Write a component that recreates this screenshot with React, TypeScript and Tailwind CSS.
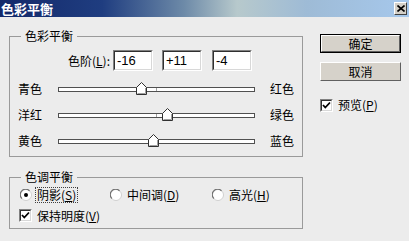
const cjk = "font-['Noto_Sans_CJK_SC',sans-serif]"

const Sunken = "border border-t-[#808080] border-l-[#808080] border-b-white border-r-white"

const LevelInput = ({ value }: { value: string }) => (
  <div className={`w-[40px] h-[21px] bg-white ${Sunken}`}>
    <div className="h-full border border-t-[#303030] border-l-[#303030] border-b-[#d8d8d8] border-r-[#d8d8d8] pl-[2px] flex items-center text-[13px] text-black font-['Liberation_Sans',sans-serif]">
      {value}
    </div>
  </div>
)

const Thumb = () => (
  <svg width="11" height="13" viewBox="0 0 11 13">
    <polygon points="5.5,0.5 10.5,5.5 10.5,12.5 0.5,12.5 0.5,5.5" fill="#ffffff" stroke="#303030" strokeWidth="1" />
    <line x1="1.5" y1="11.5" x2="9.5" y2="11.5" stroke="#a0a0a0" />
    <line x1="9.5" y1="6" x2="9.5" y2="11.5" stroke="#a0a0a0" />
  </svg>
)

const SliderRow = ({ left, right, value }: { left: string; right: string; value: number }) => {
  const pos = 98.5 + (value / 100) * 98.5
  return (
    <div className="h-[26px] flex items-center pl-[8px]">
      <div className="w-[40px] text-[12px] text-black">{left}</div>
      <div className="relative w-[197px] h-[5px] bg-white border border-t-[#505050] border-l-[#505050] border-b-[#505050] border-r-[#505050]">
        <div className="absolute left-[97px] top-0 w-px h-full bg-[#a0a0a0]" />
        <div className="absolute top-[-6px]" style={{ left: pos - 6 }}>
          <Thumb />
        </div>
      </div>
      <div className="ml-[15px] text-[12px] text-black">{right}</div>
    </div>
  )
}

const Radio = ({ checked }: { checked?: boolean }) => (
  <svg width="12" height="12" viewBox="0 0 12 12">
    <circle cx="6" cy="6" r="5.5" fill="#ffffff" stroke="#d0d0d0" />
    <path d="M1.8 9.5 A5 5 0 0 1 9.5 1.8" fill="none" stroke="#707070" strokeWidth="1.2" />
    {checked && <circle cx="6" cy="6" r="2" fill="#000000" />}
  </svg>
)

const Check = () => (
  <div className={`w-[13px] h-[13px] bg-white ${Sunken}`}>
    <div className="w-full h-full border border-t-[#303030] border-l-[#303030] border-b-[#d8d8d8] border-r-[#d8d8d8] flex items-center justify-center">
      <svg width="9" height="9" viewBox="0 0 9 9">
        <path d="M1 4 L3.3 6.5 L8 1.5" fill="none" stroke="#000000" strokeWidth="1.8" />
      </svg>
    </div>
  </div>
)

const Button = ({ label, main }: { label: string; main?: boolean }) => (
  <div className={`w-[81px] h-[19px] ${main ? "border border-black" : ""}`}>
    <div className="w-full h-full bg-[#d6d2ca] border border-t-white border-l-white border-b-[#606060] border-r-[#606060] flex items-center justify-center text-[12px] text-black">
      {label}
    </div>
  </div>
)

export default function App() {
  return (
    <div className={`w-[409px] h-[241px] bg-[#ececec] flex flex-col overflow-hidden ${cjk}`}>
      <div className="h-[17px] flex items-center justify-between bg-[linear-gradient(90deg,#13296a_0%,#1f3d80_25%,#6d8aa8_45%,#b7c9cc_58%,#9ebbd6_75%,#a6c8ec_100%)]">
        <div className="pl-[1px] text-[13px] font-bold text-white leading-none">色彩平衡</div>
        <div className="mr-[2px] w-[13px] h-[13px] bg-[#d4d0c8] border border-t-white border-l-white border-b-[#404040] border-r-[#404040] flex items-center justify-center">
          <svg width="8" height="7" viewBox="0 0 8 7">
            <path d="M0.5 0.5 L7.5 6.5 M7.5 0.5 L0.5 6.5" stroke="#000" strokeWidth="1.6" />
          </svg>
        </div>
      </div>

      <div className="flex pl-[9px]">
        <div className="w-[294px] flex flex-col">
          <fieldset className="mt-[11px] border border-[#9a9a9a] pb-[2px]">
            <legend className="ml-[11px] px-[4px] text-[12px] leading-[16px] text-black">色彩平衡</legend>
            <div className="mt-[6px] flex items-center">
              <div className="w-[100px] mr-[3px] text-right text-[12px] text-black">
                色阶(<u>L</u>):
              </div>
              <LevelInput value="-16" />
              <div className="ml-[9px]">
                <LevelInput value="+11" />
              </div>
              <div className="ml-[10px]">
                <LevelInput value="-4" />
              </div>
            </div>
            <div className="mt-[5px]">
              <SliderRow left="青色" right="红色" value={-16} />
              <SliderRow left="洋红" right="绿色" value={11} />
              <SliderRow left="黄色" right="蓝色" value={-4} />
            </div>
          </fieldset>

          <fieldset className="mt-[12px] border border-[#9a9a9a] pb-[2px]">
            <legend className="ml-[11px] px-[4px] text-[12px] leading-[16px] text-black">色调平衡</legend>
            <div className="h-[20px] flex items-center pl-[10px] text-[12px] text-black">
              <div className="w-[90px] flex items-center">
                <Radio checked />
                <span className="ml-[3px] px-[1px] border border-dotted border-[#404040] leading-[14px]">
                  阴影(<u>S</u>)
                </span>
              </div>
              <div className="w-[102px] flex items-center">
                <Radio />
                <span className="ml-[5px]">
                  中间调(<u>D</u>)
                </span>
              </div>
              <div className="flex items-center">
                <Radio />
                <span className="ml-[5px]">
                  高光(<u>H</u>)
                </span>
              </div>
            </div>
            <div className="h-[21px] flex items-center pl-[9px] text-[12px] text-black">
              <Check />
              <span className="ml-[5px]">
                保持明度(<u>V</u>)
              </span>
            </div>
          </fieldset>
        </div>

        <div className="ml-[17px] flex flex-col">
          <div className="mt-[17px]">
            <Button label="确定" main />
          </div>
          <div className="mt-[9px]">
            <Button label="取消" />
          </div>
          <div className="mt-[15px] flex items-center text-[12px] text-black">
            <Check />
            <span className="ml-[5px]">
              预览(<u>P</u>)
            </span>
          </div>
        </div>
      </div>
    </div>
  )
}
